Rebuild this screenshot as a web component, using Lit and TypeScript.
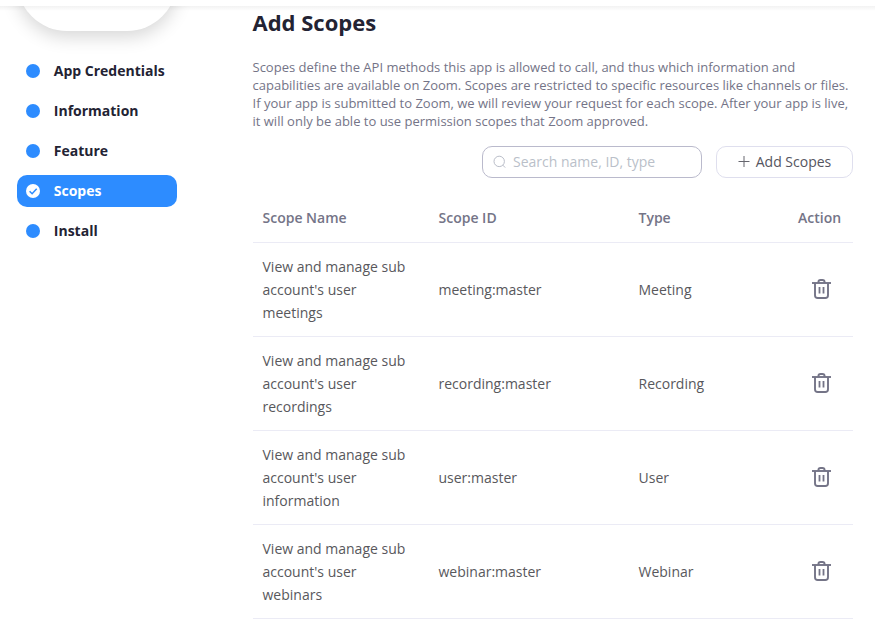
import { LitElement, html, css, svg } from "lit";
import { customElement } from "lit/decorators.js";
import { classMap } from "lit/directives/class-map.js";

const steps = ["App Credentials", "Information", "Feature", "Scopes", "Install"];
const current = "Scopes";

const intro = [
  "Scopes define the API methods this app is allowed to call, and thus which information and",
  "capabilities are available on Zoom. Scopes are restricted to specific resources like channels or files.",
  "If your app is submitted to Zoom, we will review your request for each scope. After your app is live,",
  "it will only be able to use permission scopes that Zoom approved.",
];

const scopes = [
  { name: "View and manage sub account's user meetings", id: "meeting:master", type: "Meeting" },
  { name: "View and manage sub account's user recordings", id: "recording:master", type: "Recording" },
  { name: "View and manage sub account's user information", id: "user:master", type: "User" },
  { name: "View and manage sub account's user webinars", id: "webinar:master", type: "Webinar" },
];

const trash = html`<svg class="trash" width="21" height="22" viewBox="0 0 21 22" fill="none" stroke="#747487" stroke-width="1.9">
  ${svg`<path d="M1 5H20" /><path d="M7.4 5V4.2Q7.4 2 9.6 2H11.4Q13.6 2 13.6 4.2V5" />
  <path d="M4 5V17.2Q4 20 6.8 20H14.2Q17 20 17 17.2V5" />
  <path d="M8.5 9V15.6M12.5 9V15.6" stroke-width="1.8" />`}
</svg>`;

@customElement("app-root")
export class AppRoot extends LitElement {
  static styles = css`
    :host { display: block; height: 638px; overflow: hidden; background: #fff; color: #58585c; font-family: "Open Sans", sans-serif; font-size: 14px; }
    * { box-sizing: border-box; }
    .top { height: 6px; background: #fff; }
    .page { position: relative; display: flex; height: 632px; overflow: hidden; }
    .page::before { content: ""; position: absolute; z-index: 1; inset: 0 0 auto 0; height: 5px; background: linear-gradient(rgba(0, 0, 0, 0.05), rgba(0, 0, 0, 0)); }
    .side { flex: none; width: 252.5px; padding-left: 17px; }
    .logo { width: 160px; height: 160px; margin-top: -135px; border-radius: 50px; background: #fff; box-shadow: 0 6px 18px rgba(0, 0, 0, 0.16); }
    nav { display: flex; flex-direction: column; gap: 8px; margin-top: 24px; }
    .step { display: flex; align-items: center; width: 160px; height: 32px; padding-left: 9px; border-radius: 10px; color: #232333; font-weight: 700; line-height: 20px; white-space: nowrap; }
    .step.on { background: #2d8cff; color: #fff; }
    .dot { width: 14px; height: 14px; margin-right: 13.8px; border-radius: 50%; background: #2d8cff; display: block; }
    .dot svg { display: block; }
    .on .dot { background: #fff; }
    .main { width: 600.5px; }
    h1 { margin: 0; color: #232333; font-size: 22px; line-height: 32px; font-weight: 700; }
    .intro { margin: 20px 0 0; color: #747487; font-size: 13px; line-height: 18px; white-space: nowrap; }
    .intro span { display: block; }
    .tools { display: flex; justify-content: flex-end; gap: 14px; margin-top: 16px; }
    .search { display: flex; align-items: center; width: 220px; height: 32px; padding-left: 10px; border: 1px solid #babacc; border-radius: 10px; color: #babfc9; }
    .search svg { margin-right: 7px; }
    .search span, .add span { padding-bottom: 1px; }
    .add { display: flex; align-items: center; justify-content: center; gap: 6px; width: 137px; height: 32px; border: 1px solid #dfdfee; border-radius: 10px; color: #555560; }
    .row { display: grid; grid-template-columns: 176px 200px 160px 1fr; align-items: center; height: 94px; padding-left: 10px; border-bottom: 1px solid #ebebf5; line-height: 23px; }
    .head { height: 49px; margin-top: 16px; padding-bottom: 2px; color: #747487; font-weight: 600; }
    .head span:last-child { margin-left: -0.4px; }
    .name { width: 156px; }
    .trash { display: block; margin: -1px 0 0 12px; }
  `;

  render() {
    return html`
      <div class="top"></div>
      <div class="page">
        <aside class="side">
          <div class="logo"></div>
          <nav>
            ${steps.map((s) => html`<div class=${classMap({ step: true, on: s === current })}>
              <span class="dot">${s === current
                ? html`<svg width="14" height="14" viewBox="0 0 14 14"><path d="M3.6 7.3L6.1 9.7L10.7 4.8" fill="none" stroke="#2d8cff" stroke-width="1.5" /></svg>`
                : ""}</span>${s}
            </div>`)}
          </nav>
        </aside>
        <main class="main">
          <h1>Add Scopes</h1>
          <p class="intro">${intro.map((l) => html`<span>${l}</span>`)}</p>
          <div class="tools">
            <div class="search">
              <svg width="13" height="14" viewBox="0 0 13 14" fill="none" stroke="#b9bdc8"><circle cx="6.2" cy="6.4" r="5.2" /><path d="M9.8 10.1L12.2 12.6" /></svg>
              <span>Search name, ID, type</span>
            </div>
            <div class="add">
              <svg width="12" height="12" viewBox="0 0 12 12" stroke="#66666e" stroke-width="1"><path d="M0.5 5.5H11.5M6 0V11" /></svg>
              <span>Add Scopes</span>
            </div>
          </div>
          <div class="row head"><span>Scope Name</span><span>Scope ID</span><span>Type</span><span>Action</span></div>
          ${scopes.map((s) => html`<div class="row">
            <span class="name">${s.name}</span><span>${s.id}</span><span>${s.type}</span><span>${trash}</span>
          </div>`)}
        </main>
      </div>
    `;
  }
}
